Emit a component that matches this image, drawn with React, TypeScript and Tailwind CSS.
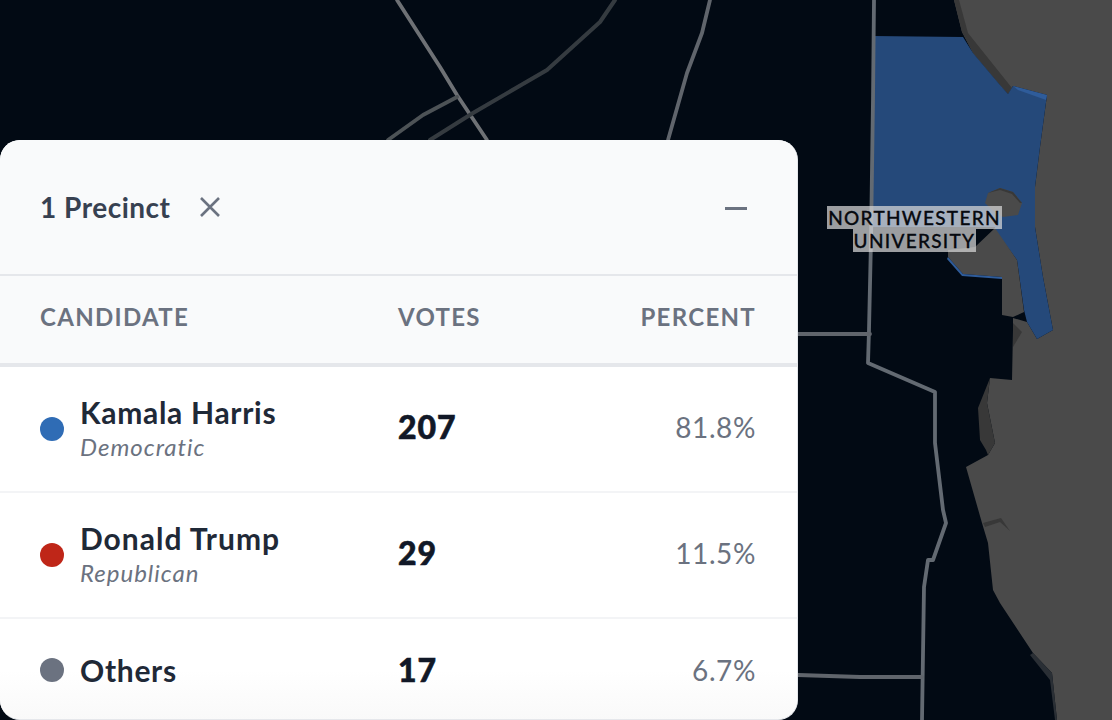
import React from "react";

function MapLayer() {
  return (
    <svg className="absolute inset-0" width="1112" height="720" viewBox="0 0 1112 720" fill="none">
      <defs>
        <filter id="soft" x="-5%" y="-5%" width="110%" height="110%">
          <feGaussianBlur stdDeviation="0.7" />
        </filter>
      </defs>
      <rect width="1112" height="720" fill="#020a14" />
      <path d="M954 0 L962 32 L973 53 L1000 85 L1008 94 L1013 86 L1047 95 L1040 147 L1035 187 L1035 227 L1043 277 L1053 330 L1037 339 L1027 322 L1013 318 L1013 330 L1012 380 L990 378 L987 403 L995 443 L988 455 L966 467 L982 523 L988 543 L993 590 L1000 603 L1033 653 L1052 673 L1057 720 L1112 720 L1112 0 Z" fill="#4a4a4a" />
      <path d="M954 0 L962 32 L973 53 L1000 85 L1008 94 L1012 88 L968 33 L959 0 Z" fill="#383838" />
      <path d="M990 378 L978 408 L980 440 L986 450 L988 455 L995 443 L987 403 Z" fill="#383838" />
      <path d="M983 523 L1001 518 L1010 531 L1000 522 L985 527 Z" fill="#383838" />
      <path d="M1013 323 L1022 332 L1013 347 Z" fill="#383838" />
      <path d="M1033 653 L1052 673 L1057 720 L1055 720 L1050 680 L1030 655 Z" fill="#2a2f35" />
      <path d="M873 36 L963 37 L973 53 L1000 85 L1008 94 L1013 86 L1047 95 L1040 147 L1035 187 L1035 227 L1043 277 L1053 330 L1037 339 L1027 322 L1024 310 L1017 260 L995 230 L995 227 L873 227 Z" fill="#25497a" />
      <path d="M1013 86 L1047 95 L1046 100 L1018 90 Z" fill="#2f5c9a" />
      <path d="M985 203 L995 213 L1003 217 L1018 215 L1022 203 L1013 192 L1000 188 L988 193 Z" fill="#4a4a4a" />
      <path d="M988 193 L1000 188 L1013 192 L1022 203 L1020 203 L1012 194 L1000 190 Z" fill="#383838" />
      <path d="M995 228 L1017 260 L1024 312 L1013 317 L1002 315 L1002 277 L963 274 L948 257 L948 250 L975 247 Z" fill="#4a4a4a" />
      <path d="M948 257 L963 274 L1002 277 L1002 279 L962 276 L947 259 Z" fill="#2f5c9a" />
      <g filter="url(#soft)" strokeLinejoin="round" strokeLinecap="round" stroke="#60656c" strokeWidth="3.8">
        <path d="M397 0 L440 67 L457 95 L487 140" stroke="#6e7175" />
        <path d="M388 140 L423 115 L457 97" stroke="#4d5257" />
        <path d="M430 140 L473 113 L547 70 L600 22 L615 0" stroke="#353b41" strokeWidth="4" />
        <path d="M710 0 L702 33 L687 73 L668 140" />
        <path d="M874 0 L873 100 L871 240 L869 330 L868 363 L935 392 L935 443 L943 510 L946 523 L933 560 L928 560 L924 587 L922 720" stroke="#636a72" />
        <path d="M798 334 L870 334" />
        <path d="M798 675 L860 677 L922 677" />
      </g>
    </svg>
  );
}

function LabelText({ children }: { children: React.ReactNode }) {
  return (
    <span className="bg-[#d8d8d8b8] px-[1px] leading-[23px] text-[#06090f] [-webkit-text-stroke:0.3px_#06090f]">
      {children}
    </span>
  );
}

function Row({
  color,
  name,
  party,
  votes,
  pct,
  last,
  wide,
}: {
  color: string;
  name: string;
  party?: string;
  votes: string;
  pct: string;
  last?: boolean;
  wide?: boolean;
}) {
  return (
    <div
      className={
        last
          ? "flex h-[102px] items-center bg-gradient-to-b from-white via-white to-[#f9f9f9] pl-10 pr-[41px]"
          : "flex h-[126px] items-center border-b-2 border-[#f3f4f6] pl-10 pr-[41px]"
      }
    >
      <div className="flex w-[358px] items-center gap-4">
        <span className="h-6 w-6 rounded-full" style={{ backgroundColor: color }} />
        <div className={party ? "flex flex-col pb-[3px]" : "flex flex-col"}>
          <span
            className={
              wide
                ? "text-[30px] leading-[36px] font-bold tracking-[1px] text-[#1f2937]"
                : "text-[30px] leading-[36px] font-bold tracking-[0.7px] text-[#1f2937]"
            }
          >
            {name}
          </span>
          {party && (
            <span className="mt-[3px] text-[24px] leading-[28px] italic tracking-[1px] text-[#6b7280]">{party}</span>
          )}
        </div>
      </div>
      <span className={(last ? "" : "pb-1 ") + "text-[32px] font-black tracking-[1px] text-[#111827] [-webkit-text-stroke:0.6px_#111827]"}>
        {votes}
      </span>
      <span className={(last ? "" : "pb-1 ") + "ml-auto text-[28px] tracking-[0.6px] text-[#6b7280]"}>{pct}</span>
    </div>
  );
}

export default function App() {
  return (
    <div className="relative h-[720px] w-[1112px] overflow-hidden bg-[#020a14] pt-[140px] font-['Lato',sans-serif]">
      <MapLayer />
      <div className="absolute left-[826px] top-[206px] flex w-[177px] flex-col items-center text-[19px] font-medium tracking-[1.3px]">
        <LabelText>NORTHWESTERN</LabelText>
        <LabelText>UNIVERSITY</LabelText>
      </div>
      <div className="relative h-[580px] w-[798px] overflow-hidden rounded-[20px] border-r border-b border-[#e5e7eb] bg-white">
        <div className="flex h-[136px] items-center border-b-2 border-[#e5e7eb] bg-[#f9fafb] pl-10 pr-[50px]">
          <span className="text-[28px] font-bold tracking-[0.5px] text-[#374151]">1 Precinct</span>
          <svg className="ml-[28px]" width="24" height="24" viewBox="0 0 24 24" fill="none" stroke="#6b7280" strokeWidth="2.6">
            <path d="M3 3 L21 21 M21 3 L3 21" />
          </svg>
          <span className="mt-[2px] ml-auto h-[3px] w-[22px] bg-[#6b7280]" />
        </div>
        <div className="flex h-[91px] items-center border-b-4 border-[#e5e7eb] bg-[#f9fafb] pb-[6px] pl-10 pr-[41px] text-[24px] font-bold tracking-[1.3px] text-[#6b7280]">
          <span className="w-[358px]">CANDIDATE</span>
          <span>VOTES</span>
          <span className="ml-auto">PERCENT</span>
        </div>
        <Row color="#2f6cb5" name="Kamala Harris" party="Democratic" votes="207" pct="81.8%" />
        <Row color="#bf2618" name="Donald Trump" party="Republican" votes="29" pct="11.5%" wide />
        <Row color="#6b7280" name="Others" votes="17" pct="6.7%" last />
      </div>
    </div>
  );
}
